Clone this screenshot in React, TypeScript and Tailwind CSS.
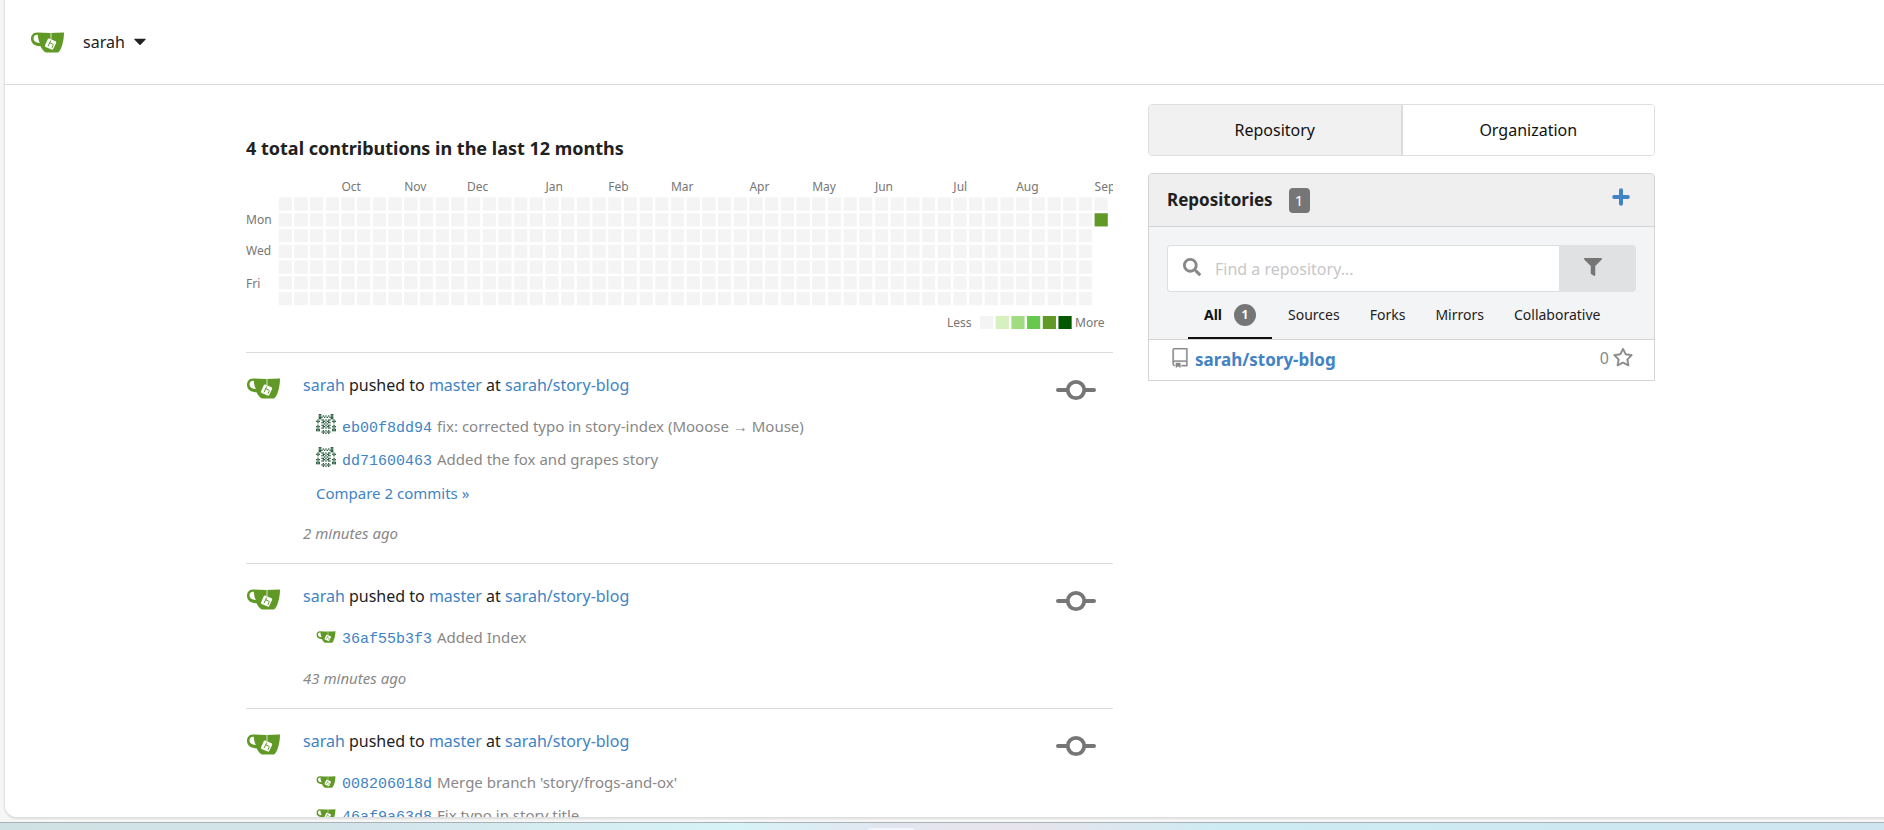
import React from "react";
import { GoRepo, GoStar, GoTriangleDown } from "react-icons/go";
import { FaSearch, FaFilter } from "react-icons/fa";

const months: [string, number][] = [
  ["Oct", 4], ["Nov", 8], ["Dec", 12], ["Jan", 17], ["Feb", 21], ["Mar", 25],
  ["Apr", 30], ["May", 34], ["Jun", 38], ["Jul", 43], ["Aug", 47], ["Sep", 52],
];
const legend = ["#f4f4f4", "#d7f0bf", "#a0dc82", "#66c84c", "#609926", "#025900"];

function GiteaCup({ className }: { className: string }) {
  return (
    <svg viewBox="0 0 66 42" className={className} aria-hidden="true">
      <path
        fillRule="evenodd"
        fill="#609926"
        d="M12 1C4 1 0 7 0 13c0 10 7 15 19 15.500C21 33 25 39 30 41h24c6-3 12-22 12-40-20 1-36 1-54 0ZM12 5.500h1.500c.5 6 1.500 11 4 16.500C9 21.500 5 18 5 12.500c0-4 3-7 7-7Z"
      />
      <path d="M40 1.500v13" stroke="#d5e6c4" strokeWidth="2" fill="none" />
      <path
        fill="#fff"
        d="M36.500 13 49 18.500c1.300.7 1.700 2 1.100 3.300L44.500 34c-.7 1.400-2 1.800-3.300 1.200l-12-5.400c-1.300-.7-1.800-2-1.100-3.300l5.400-12c.6-1.400 1.700-1.900 3-1.500Z"
      />
      <path
        d="m39.500 17-5.500 11.500M37.500 21.500l5.500 2.500c1.500.7 1.700 1.500 1 3l-2 4.500"
        stroke="#609926"
        strokeWidth="2"
        fill="none"
      />
    </svg>
  );
}

function CommitIcon({ className }: { className: string }) {
  return (
    <svg viewBox="0 0 40 40" className={className} fill="none" stroke="currentColor" aria-hidden="true">
      <circle cx="20" cy="20" r="8.2" strokeWidth="3.8" />
      <path d="M2 20h9M29 20h9" strokeWidth="4" strokeLinecap="round" />
    </svg>
  );
}

function PlusIcon({ className }: { className: string }) {
  return (
    <svg viewBox="0 0 18 18" className={className} stroke="currentColor" strokeWidth="4" strokeLinecap="round" aria-hidden="true">
      <path d="M9 2.200v13.600M2.200 9h13.600" />
    </svg>
  );
}

const identiconRows = [
  "..##.......##..",
  "..##.#.#.#.##..",
  "..###.#.#.###..",
  "..##.......##..",
  ".#..##.#.##..#.",
  "###..##.##..###",
  ".#..##.#.##..#.",
  "......#.#......",
  ".#..##.#.##..#.",
  "###..##.##..###",
  ".#..##.#.##..#.",
  "###.........###",
  "###..#.#.#..###",
  "....###.###....",
  ".....#.#.#.....",
];

function Identicon({ className }: { className: string }) {
  return (
    <svg viewBox="0 0 15 15" className={className} aria-hidden="true">
      {identiconRows.flatMap((row, y) =>
        row.split("").map((c, x) =>
          c === "#" ? <rect key={`${x}-${y}`} x={x} y={y} width="1" height="1" fill="#2f6043" /> : null
        )
      )}
    </svg>
  );
}

const columnX = (c: number) => 32.7 + c * 15.69;

function Heatmap() {
  return (
    <svg viewBox="0 0 867 161" className="mt-2 block w-full text-[12px]" fill="#767676" role="img" aria-label="Contributions">
      {months.map(([m, c]) => (
        <text key={m} x={columnX(c)} y="22">{m}</text>
      ))}
      <text x="0" y="55">Mon</text>
      <text x="0" y="86">Wed</text>
      <text x="0" y="119">Fri</text>
      {Array.from({ length: 53 }, (_, c) =>
        Array.from({ length: c === 52 ? 2 : 7 }, (_, r) => (
          <rect
            key={`${c}-${r}`}
            x={columnX(c)}
            y={28.5 + r * 15.75}
            width="13.2"
            height="13.2"
            fill={c === 52 && r === 1 ? "#609926" : "#f4f4f4"}
          />
        ))
      )}
      <text x="701" y="158">Less</text>
      {legend.map((f, i) => (
        <rect key={f} x={734 + i * 15.69} y="147" width="13.2" height="13" fill={f} />
      ))}
      <text x="829" y="158">More</text>
    </svg>
  );
}

type Commit = { sha: string; msg: string; bot?: boolean };
type Item = { commits: Commit[]; compare?: string; time: string };

const feed: Item[] = [
  {
    commits: [
      { sha: "eb00f8dd94", msg: "fix: corrected typo in story-index (Mooose → Mouse)", bot: true },
      { sha: "dd71600463", msg: "Added the fox and grapes story", bot: true },
    ],
    compare: "Compare 2 commits »",
    time: "2 minutes ago",
  },
  { commits: [{ sha: "36af55b3f3", msg: "Added Index" }], time: "43 minutes ago" },
  {
    commits: [
      { sha: "008206018d", msg: "Merge branch 'story/frogs-and-ox'" },
      { sha: "46af9a63d8", msg: "Fix typo in story title" },
    ],
    time: "1 hour ago",
  },
];

function FeedItem({ item }: { item: Item }) {
  return (
    <article className="flex items-start border-t border-[#dcdcdc] pt-5 pb-[18px]">
      <GiteaCup className="mt-[5px] ml-px h-[21px] w-[33px] shrink-0" />
      <div className="ml-[23px] min-w-0 flex-1">
        <p className="text-[16px] leading-6">
          <a href="#sarah" className="text-[#4183c4]">sarah</a> pushed to{" "}
          <a href="#master" className="text-[#4183c4]">master</a> at{" "}
          <a href="#repo" className="text-[#4183c4]">sarah/story-blog</a>
        </p>
        <ul className="mt-[14px] mb-[11px] ml-[13px] text-[15px] leading-[33px]">
          {item.commits.map((c) => (
            <li key={c.sha} className="flex h-[33px] items-center whitespace-nowrap">
              {c.bot ? (
                <Identicon className="mr-[6px] mb-[8px] h-5 w-5" />
              ) : (
                <GiteaCup className="mr-[6px] mb-1 h-3 w-5" />
              )}
              <span className="text-[#888]">
                <a href={"#" + c.sha} className="mr-[5px] font-['Liberation_Mono',monospace] text-[#4183c4]">{c.sha}</a>
                {c.msg}
              </span>
            </li>
          ))}
          {item.compare && (
            <li className="h-[33px]"><a href="#compare" className="text-[#4183c4]">{item.compare}</a></li>
          )}
        </ul>
        <p className="text-[15px] leading-6 text-[#888] italic">{item.time}</p>
      </div>
      <CommitIcon className="mt-[-3px] mr-[17px] h-10 w-10 shrink-0 text-[#767676]" />
    </article>
  );
}

function Sidebar() {
  return (
    <aside className="w-[507px] shrink-0 pt-[19px]">
      <div className="flex h-[52px] overflow-hidden rounded border border-[#dedede] text-[16px]">
        <button className="flex-1 border-r-2 border-[#dcdcdc] bg-[#f1f1f1] text-[#111]">Repository</button>
        <button className="flex-1 bg-white text-[#111]">Organization</button>
      </div>
      <section className="mt-[17px] rounded-t border border-[#d4d4d5]">
        <header className="flex h-[52px] items-center rounded-t bg-[#efefef] px-[18px]">
          <h2 className="text-[17px] font-bold">Repositories</h2>
          <span className="ml-4 flex h-[25px] w-[21px] items-center justify-center rounded bg-[#767676] text-[15px] text-white">1</span>
          <a href="#new" aria-label="New repository" className="mr-[6px] mb-[6px] ml-auto text-[#4183c4]">
            <PlusIcon className="h-[18px] w-[18px]" />
          </a>
        </header>
        <div className="border-y border-[#d4d4d5] bg-[#f3f4f6] px-[18px] pt-[18px]">
          <div className="flex h-[47px]">
            <label className="flex min-w-0 flex-1 items-center rounded-l border border-r-0 border-[#dedede] bg-white pl-[15px]">
              <FaSearch className="mb-1 h-[18px] w-[18px] shrink-0 text-[#888]" />
              <input
                type="text"
                aria-label="Find a repository"
                placeholder="Find a repository..."
                className="ml-[14px] min-w-0 flex-1 bg-transparent text-[16px] outline-none placeholder:text-[#c7c7c7]"
              />
            </label>
            <button aria-label="Filter" className="flex w-[77px] items-center justify-center rounded-r bg-[#e0e1e2] pr-[10px]">
              <FaFilter className="mb-1 h-[18px] w-[18px] text-[#767676]" />
            </button>
          </div>
          <nav className="ml-[21px] flex h-[47px] text-[14px]">
            <a href="#all" className="mr-4 flex items-center border-b-2 border-[#111] px-4 font-bold text-[#111]">
              All
              <span className="ml-3 flex h-[22px] w-[22px] items-center justify-center rounded-full bg-[#767676] text-[12px] text-white">1</span>
            </a>
            {["Sources", "Forks", "Mirrors", "Collaborative"].map((t) => (
              <a key={t} href={"#" + t} className="mr-[30px] flex items-center border-b-2 border-transparent last:mr-0">{t}</a>
            ))}
          </nav>
        </div>
        <div className="flex h-10 items-center pr-[21px] pl-[21px]">
          <GoRepo className="mb-1 h-5 w-5 text-[#888]" stroke="currentColor" strokeWidth="0.4" />
          <a href="#repo" className="ml-[5px] text-[17px] font-bold text-[#4183c4]">sarah/story-blog</a>
          <span className="mb-1 ml-auto flex items-center gap-1 text-[16px] text-[#888]">
            0 <GoStar className="h-5 w-5" stroke="currentColor" strokeWidth="0.8" />
          </span>
        </div>
      </section>
    </aside>
  );
}

export default function App() {
  return (
    <div className="flex h-screen flex-col overflow-hidden bg-[#f6f6f6] font-['Noto_Sans',sans-serif] text-[#212121]">
      <div className="mb-[5px] ml-[5px] min-h-0 flex-1 overflow-hidden rounded-bl-xl bg-white shadow-[0_1px_2px_1px_#dedede]">
        <header className="flex h-[85px] items-center border-b border-[#dcdcdc] pl-[26px]">
          <GiteaCup className="h-[21px] w-[33px]" />
          <button className="ml-[19px] flex items-center gap-1 text-[16px]">
            sarah <GoTriangleDown className="h-[22px] w-[22px]" />
          </button>
        </header>
        <main className="mx-auto flex max-w-[1421px] justify-between gap-[35px] pl-3">
          <div className="min-w-0 flex-1 pt-[50px]">
            <h1 className="text-[18px] leading-[26px] font-bold">4 total contributions in the last 12 months</h1>
            <Heatmap />
            <div className="mt-[22px]">
              {feed.map((item) => <FeedItem key={item.time} item={item} />)}
            </div>
          </div>
          <Sidebar />
        </main>
      </div>
      <footer className="flex h-2 shrink-0 border-t border-[#a9b3b5] bg-[linear-gradient(90deg,#d0e1e4_0%,#d3e5ea_20%,#d6f3f8_39%,#e2e6f0_47%,#e7e3ec_54%,#cdebf3_65%,#cfe6f0_100%)]">
        <span className="mt-[5px] ml-[46%] h-2 w-12 rounded bg-[#f2f5fa]" />
      </footer>
    </div>
  );
}
